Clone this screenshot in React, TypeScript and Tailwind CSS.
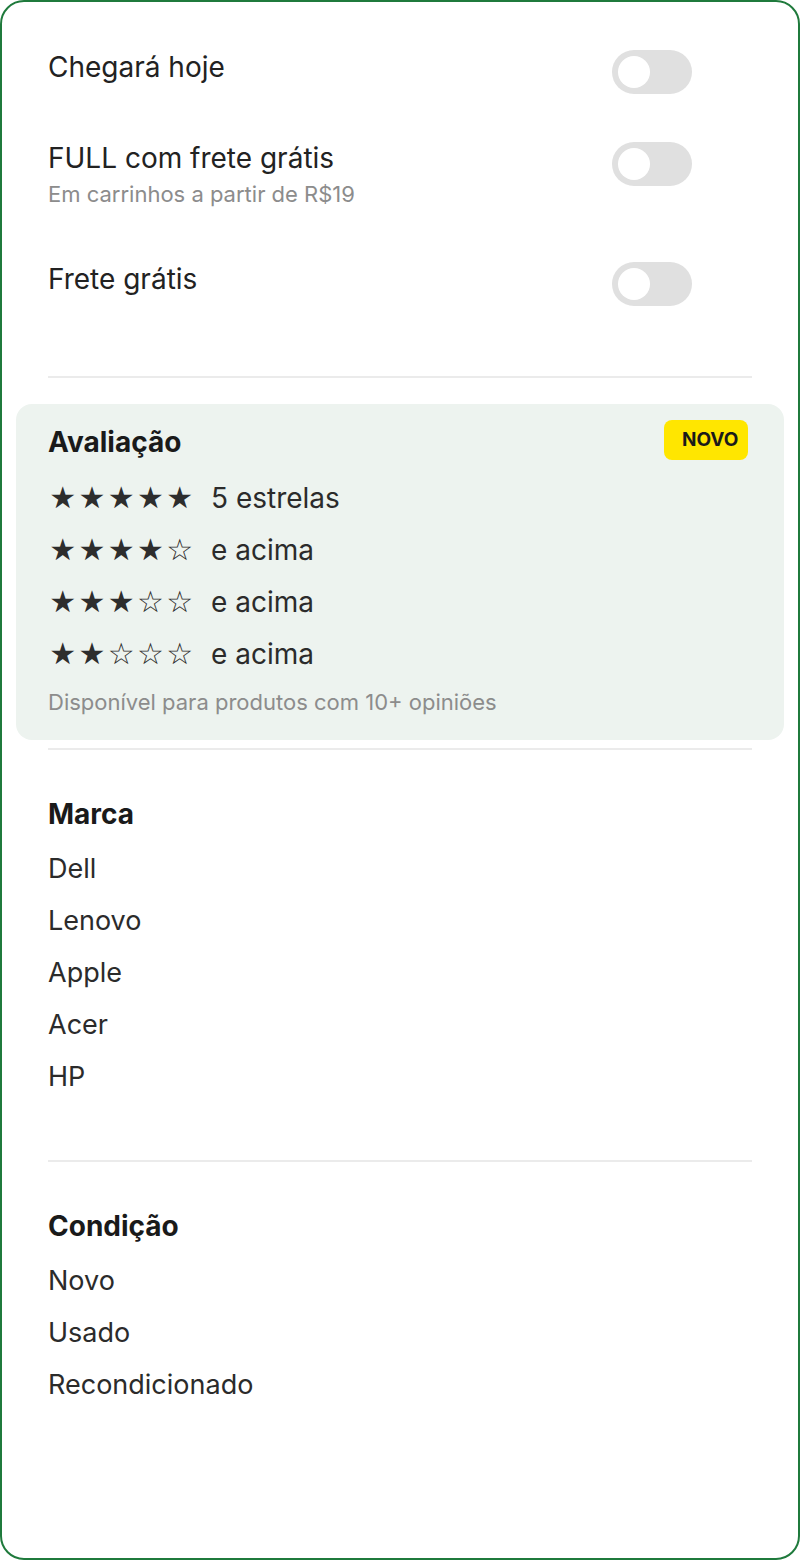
import React from 'react';

const Toggle: React.FC<{ className?: string }> = ({ className = '' }) => (
  <div className={`relative h-[44px] w-[80px] shrink-0 rounded-full bg-[#e0e0e0] ${className}`}>
    <div className="absolute left-[6px] top-[6px] h-[32px] w-[32px] rounded-full bg-white" />
  </div>
);

const Stars: React.FC<{ filled: number }> = ({ filled }) => (
  <div className="flex w-[163px] shrink-0 font-['DejaVu_Sans',sans-serif] text-[30px] leading-[52px] text-[#2d2d2d]">
    {[0, 1, 2, 3, 4].map((i) => (
      <span key={i} className="inline-block w-[29.25px] text-center">
        {i < filled ? '★' : '☆'}
      </span>
    ))}
  </div>
);

const ratings = [
  { filled: 5, label: '5 estrelas' },
  { filled: 4, label: 'e acima' },
  { filled: 3, label: 'e acima' },
  { filled: 2, label: 'e acima' },
];

const brands = ['Dell', 'Lenovo', 'Apple', 'Acer', 'HP'];
const conditions = ['Novo', 'Usado', 'Recondicionado'];

const App: React.FC = () => {
  return (
    <div className="h-[1560px] w-[800px] overflow-hidden rounded-[24px] border-2 border-[#1f7a3c] bg-white font-['Inter',sans-serif] text-[#222]">
      {/* shipping toggles */}
      <div className="px-[46px] pt-[48px]">
        <div className="flex items-start justify-between pr-[60px]">
          <span className="text-[28px] leading-[34px]">Chegará hoje</span>
          <Toggle />
        </div>

        <div className="mt-[47px] flex items-start justify-between pr-[60px]">
          <div className="flex flex-col">
            <span className="text-[28px] leading-[34px]">FULL com frete grátis</span>
            <span className="mt-[4px] text-[22px] leading-[30px] text-[#8c8c8c]">
              Em carrinhos a partir de R$19
            </span>
          </div>
          <Toggle className="mt-[1px]" />
        </div>

        <div className="mt-[53px] flex items-start justify-between pr-[60px]">
          <span className="text-[28px] leading-[34px]">Frete grátis</span>
          <Toggle />
        </div>

        <div className="mt-[70px] h-[2px] bg-[#ebebeb]" />
      </div>

      {/* rating */}
      <div className="mx-[14px] mt-[26px] rounded-2xl bg-[#edf3ef] pb-[23px] pl-[32px] pr-[36px] pt-[16px]">
        <div className="flex items-start justify-between">
          <span className="mt-[5px] text-[28px] font-bold leading-[34px] text-[#1a1a1a]">Avaliação</span>
          <span className="flex h-[40px] w-[84px] items-center rounded-lg bg-[#ffe600] pl-[18px] text-[19px] font-bold text-[#1a1a1a]">
            NOVO
          </span>
        </div>
        <div className="mt-[12px] flex flex-col">
          {ratings.map((r, i) => (
            <div key={i} className="flex h-[52px] items-center">
              <Stars filled={r.filled} />
              <span className="text-[28px] leading-[52px] text-[#2b2b2b]">{r.label}</span>
            </div>
          ))}
        </div>
        <p className="mt-[7px] text-[22px] leading-[30px] text-[#8c8c8c]">
          Disponível para produtos com 10+ opiniões
        </p>
      </div>

      {/* brand + condition */}
      <div className="px-[46px]">
        <div className="mt-[8px] h-[2px] bg-[#ebebeb]" />

        <h3 className="mt-[47px] text-[28px] font-bold leading-[34px] text-[#1a1a1a]">Marca</h3>
        <ul className="mt-[12px]">
          {brands.map((b) => (
            <li key={b} className="text-[27px] leading-[52px] text-[#2b2b2b]">
              {b}
            </li>
          ))}
        </ul>

        <div className="mt-[57px] h-[2px] bg-[#ebebeb]" />

        <h3 className="mt-[47px] text-[28px] font-bold leading-[34px] text-[#1a1a1a]">Condição</h3>
        <ul className="mt-[12px]">
          {conditions.map((c) => (
            <li key={c} className="text-[27px] leading-[52px] text-[#2b2b2b]">
              {c}
            </li>
          ))}
        </ul>
      </div>
    </div>
  );
};

export default App;
